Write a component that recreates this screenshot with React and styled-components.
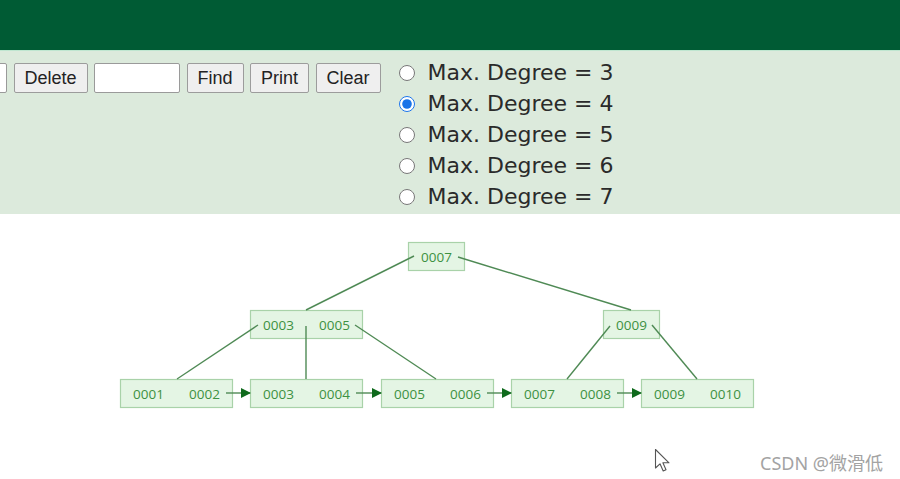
import React from 'react';
import styled, { createGlobalStyle } from 'styled-components';

const GlobalStyle = createGlobalStyle`
  html, body {
    margin: 0;
    padding: 0;
    background: #ffffff;
  }
  body {
    font-family: "Liberation Sans", Arial, sans-serif;
  }
`;

// tree data, page coordinates
const CELL = 56;
const nodes = [
  { x: 408, y: 242, keys: ['0007'] },
  { x: 250, y: 310, keys: ['0003', '0005'] },
  { x: 603, y: 310, keys: ['0009'] },
  { x: 120, y: 379, keys: ['0001', '0002'] },
  { x: 250, y: 379, keys: ['0003', '0004'] },
  { x: 381, y: 379, keys: ['0005', '0006'] },
  { x: 511, y: 379, keys: ['0007', '0008'] },
  { x: 641, y: 379, keys: ['0009', '0010'] },
];

const edges = [
  [414, 256, 306, 310],
  [458, 257, 631, 310],
  [258, 325, 177, 379],
  [306, 326, 306, 379],
  [355, 325, 436, 379],
  [610, 326, 567, 379],
  [652, 325, 697, 379],
];

const arrows = [
  [226, 250],
  [356, 381],
  [487, 511],
  [617, 641],
];

const degrees = [3, 4, 5, 6, 7];

const App = () => {
  return (
    <>
      <GlobalStyle />
      <Page>
        <Header />
        <Panel>
          <Controls>
            <TextInput $width={76} />
            <Button>Delete</Button>
            <TextInput $width={86} />
            <Button>Find</Button>
            <Button>Print</Button>
            <Button>Clear</Button>
          </Controls>
          <RadioGroup>
            {degrees.map((d) => (
              <RadioRow key={d}>
                <Radio type="radio" name="degree" defaultChecked={d === 4} />
                <span>Max. Degree = {d}</span>
              </RadioRow>
            ))}
          </RadioGroup>
        </Panel>
        <Canvas>
          <svg width="900" height="265" viewBox="0 214 900 265">
            <defs>
              <marker id="head" markerWidth="10" markerHeight="10" refX="9" refY="5" orient="auto" markerUnits="userSpaceOnUse">
                <path d="M0,0 L10,5 L0,10 Z" fill="#0f6a1c" />
              </marker>
            </defs>
            {nodes.map((n, i) => (
              <g key={i}>
                <rect
                  x={n.x + 0.5}
                  y={n.y + 0.5}
                  width={n.keys.length * CELL}
                  height={28}
                  fill="#e4f5e4"
                  stroke="#a9d2a9"
                  strokeWidth="1.2"
                />
                {n.keys.map((k, j) => (
                  <NodeText key={k} x={n.x + CELL * j + CELL / 2 + 0.5} y={n.y + 15}>
                    {k}
                  </NodeText>
                ))}
              </g>
            ))}
            {edges.map((e, i) => (
              <line key={i} x1={e[0]} y1={e[1]} x2={e[2]} y2={e[3]} stroke="#4f8a55" strokeWidth="1.4" />
            ))}
            {arrows.map((a, i) => (
              <line key={i} x1={a[0]} y1={393} x2={a[1]} y2={393} stroke="#4f8a55" strokeWidth="1.4" markerEnd="url(#head)" />
            ))}
          </svg>
        </Canvas>
        <Cursor width="20" height="26" viewBox="0 0 20 26">
          <path d="M1.5 1.5 L1.5 20 L6 15.8 L9.2 23 L12 21.8 L8.9 14.8 L15 14.8 Z" fill="#ffffff" stroke="#555" strokeWidth="1.1" strokeLinejoin="round" />
        </Cursor>
        <Watermark>CSDN @微滑低</Watermark>
      </Page>
    </>
  );
};

export default App;

const Page = styled.div`
  position: relative;
  width: 900px;
  height: 479px;
  overflow: hidden;
  background: #ffffff;
`;

const Header = styled.div`
  height: 50px;
  background: #005b34;
  border-bottom: 1px solid #bfe6d0;
`;

const Panel = styled.div`
  display: flex;
  align-items: flex-start;
  height: 157px;
  padding-top: 6px;
  background: #dceadc;
  overflow: hidden;
`;

const Controls = styled.div`
  display: flex;
  align-items: center;
  gap: 6.5px;
  margin-left: -69px;
  margin-top: 6px;
`;

const TextInput = styled.input`
  box-sizing: border-box;
  width: ${(p) => p.$width}px;
  height: 30px;
  margin: 0;
  border: 1px solid #9a9a9a;
  border-radius: 2px;
  background: #ffffff;
`;

const Button = styled.button`
  box-sizing: border-box;
  height: 30px;
  margin: 0;
  padding: 0 10px;
  font-family: "Liberation Sans", Arial, sans-serif;
  font-size: 18px;
  color: #222;
  background: #efefef;
  border: 1px solid #9c9c9c;
  border-radius: 2px;
`;

const RadioGroup = styled.div`
  display: flex;
  flex-direction: column;
  margin-left: 18px;
`;

const RadioRow = styled.label`
  display: flex;
  align-items: center;
  height: 31px;
  font-family: "DejaVu Sans", Verdana, sans-serif;
  font-size: 22px;
  color: #2a2a2a;
`;

const Radio = styled.input`
  width: 16px;
  height: 16px;
  margin: 0 13px 0 0;
  accent-color: #1a73e8;
`;

const Canvas = styled.div`
  height: 265px;
  svg {
    display: block;
  }
`;

const NodeText = styled.text`
  font-family: "Open Sans", "DejaVu Sans", sans-serif;
  font-size: 13.5px;
  fill: #3d9142;
  text-anchor: middle;
  dominant-baseline: central;
`;

const Cursor = styled.svg`
  position: absolute;
  left: 654px;
  top: 448px;
`;

const Watermark = styled.div`
  position: absolute;
  left: 760px;
  top: 449px;
  font-family: "Noto Sans", "Noto Sans CJK SC", sans-serif;
  font-size: 18px;
  color: #a3a3a3;
`;
